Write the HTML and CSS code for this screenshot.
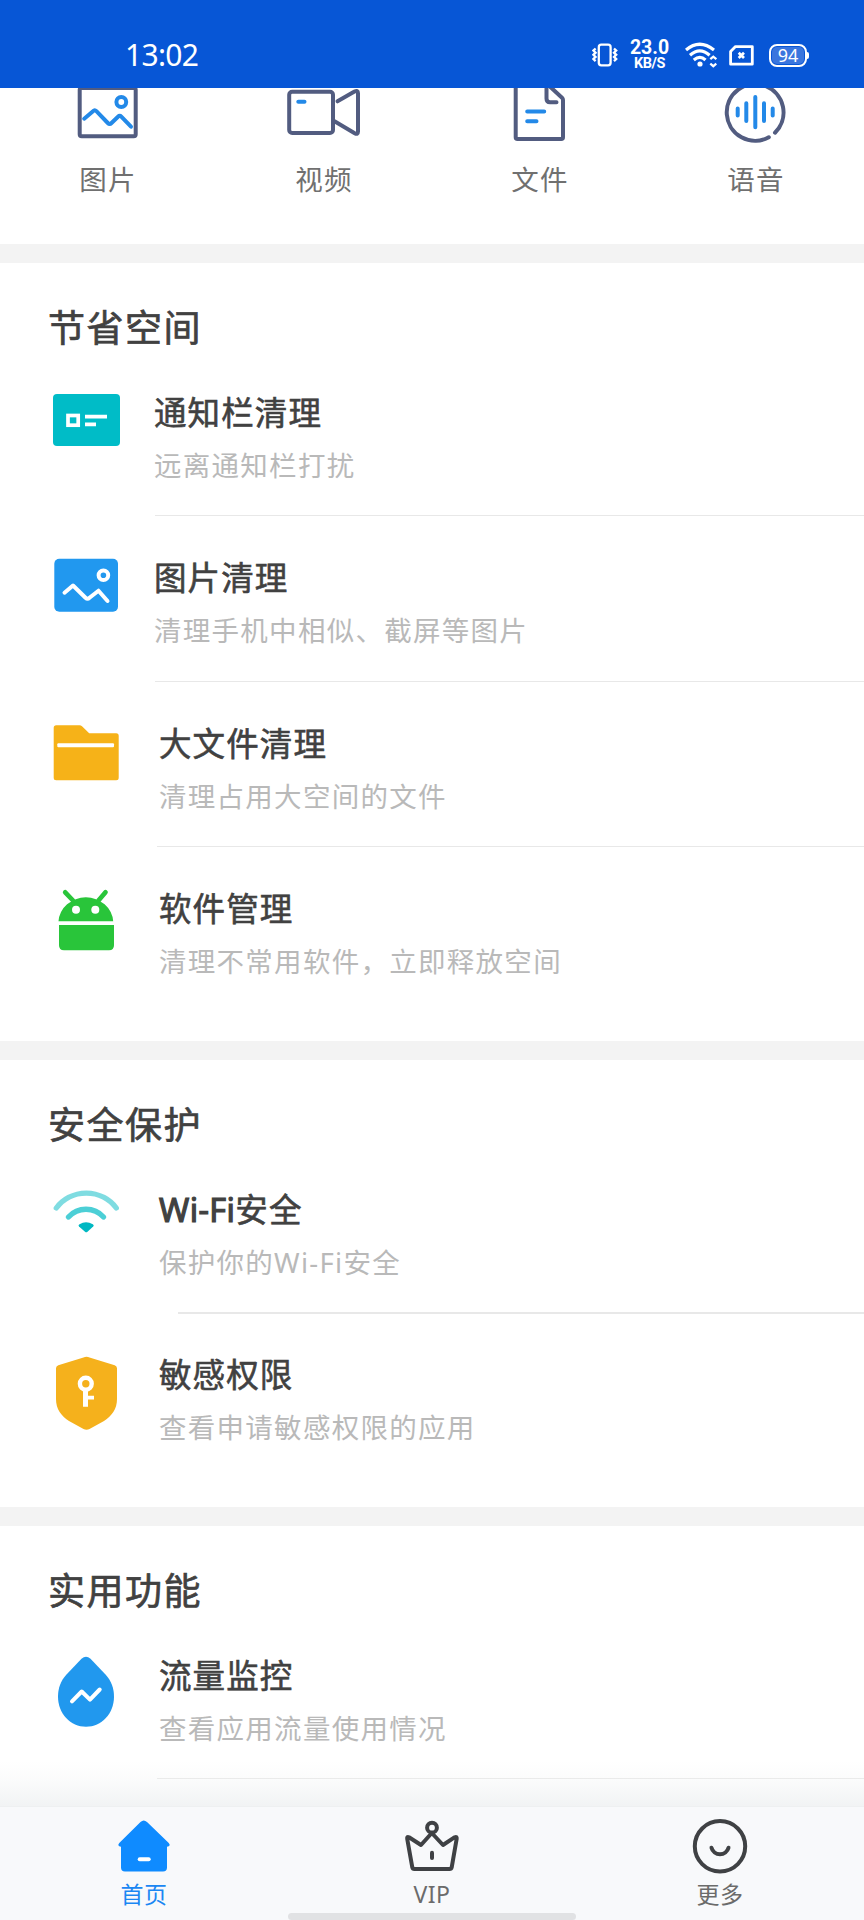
FILE: index.html
```html
<!DOCTYPE html>
<html lang="zh-CN">
<head>
<meta charset="utf-8">
<title>手机清理</title>
<link rel="stylesheet" href="styles.css">
</head>
<body>
<div class="phone">
  <header class="status">
    <span class="clock">13:02</span>
    <div class="indicators">
      <svg class="vibrate" width="26" height="24" viewBox="0 0 26 24" fill="none" stroke="#fff" stroke-width="2.300">
        <rect x="6.800" y="1.700" width="11.800" height="20.600" rx="2.500"/>
        <path d="M3.600 5.500 1.400 7.600 3.600 9.700 1.400 11.800 3.600 13.900 1.400 16 3.600 18.100M22 5.500 24.200 7.600 22 9.700 24.200 11.800 22 13.900 24.200 16 22 18.100"/>
      </svg>
      <div class="speed"><span class="speed-value">23.0</span><span class="speed-unit">KB/S</span></div>
      <svg class="signal" width="32" height="26" viewBox="0 0 32 26" fill="none" stroke="#fff" stroke-width="3.200">
        <path d="M1 8Q14.500-3.500 29 8M5 13.200Q14.800 4.500 24.600 13.200M8.800 18Q15 12.800 20.500 18"/>
        <circle cx="15" cy="22" r="2.600" fill="#fff" stroke="none"/>
        <path d="M25.300 17.200 28.300 14.600 31.300 17.200M25.300 21.600 28.300 24.200 31.300 21.600" stroke-width="2.200"/>
      </svg>
      <svg class="sim" width="25" height="21" viewBox="0 0 25 21" fill="none" stroke="#fff" stroke-width="2.800">
        <path d="M6.500 1.600H23.300V19.200H1.600V6.500Z" stroke-linejoin="round"/>
        <path d="M9.700 7.700 15 13M15 7.700 9.700 13" stroke-width="2.700"/>
      </svg>
      <div class="battery"><span class="battery-level">94</span></div>
    </div>
  </header>

  <main class="content">
    <nav class="files">
      <a class="file">
        <svg width="216" height="60" viewBox="0 0 216 60" class="line-icon">
          <rect x="79.700" y="0" width="56" height="48.200" rx="2"/>
          <g class="accent"><circle cx="121.300" cy="14" r="4.900"/>
          <path d="M84.200 30.700 93 23.200Q94.700 21.500 96.400 23.200L107.800 35Q109.700 36.900 111.500 35L118 28.700Q119.700 27 121.300 28.700L131 38.700"/></g>
        </svg>
        <span class="file-name">图片</span>
      </a>
      <a class="file">
        <svg width="216" height="60" viewBox="0 0 216 60" class="line-icon">
          <rect x="73.200" y="3.700" width="43.800" height="41.200" rx="3"/>
          <path d="M121.500 13.300 138.500 3.500Q142 1.800 142 5.200V43.500Q142 47 138.700 45.200L118.500 33.300"/>
          <path class="accent" d="M82.300 13.700H88.500"/>
        </svg>
        <span class="file-name">视频</span>
      </a>
      <a class="file">
        <svg width="216" height="60" viewBox="0 0 216 60" class="line-icon">
          <path d="M83.700-6V49.200Q83.700 51 85.500 51H129.200Q131 51 131 49.200V12Q131 10.700 130 9.700L113-6"/>
          <path d="M114.500-4V10.500Q114.500 14.300 118 14.300H124.500"/>
          <path class="accent" d="M95.200 23.400H112.200M95.200 33.200H104.500"/>
        </svg>
        <span class="file-name">文件</span>
      </a>
      <a class="file">
        <svg width="216" height="60" viewBox="0 0 216 60" class="line-icon">
          <path d="M120.800 49.300A28.400 28.400 0 1 1 127 44.700"/>
          <path class="accent" d="M89.700 20.600V27.400M98.300 15.300V33M107.300 9V39.200M116 15.300V33M124.700 20.600V27.400"/>
        </svg>
        <span class="file-name">语音</span>
      </a>
    </nav>

    <section class="group">
      <h2 class="group-title">节省空间</h2>
      <div class="row row-near">
        <svg class="row-icon" viewBox="0 0 80 84">
          <rect x="7" y="8" width="67" height="52" rx="4" fill="#00bcc7"/>
          <rect x="22" y="29.500" width="10.200" height="9.700" fill="none" stroke="#fff" stroke-width="3.700"/>
          <path d="M39 28.700H61V32.600H39ZM39 36.400H50V40.200H39Z" fill="#fff"/>
        </svg>
        <div class="row-text"><h3 class="row-title">通知栏清理</h3><p class="row-note">远离通知栏打扰</p></div>
      </div>
      <div class="row row-near">
        <svg class="row-icon" viewBox="0 0 80 84">
          <rect x="8.300" y="7.700" width="63.700" height="53" rx="5" fill="#2198ef"/>
          <g class="stroke-white"><circle cx="57.400" cy="24.300" r="4.800"/>
          <path d="M18.500 41.700 27 34.500 39.500 46.800Q41.500 48.700 43.500 46.800L52.500 39.700 61.500 50"/></g>
        </svg>
        <div class="row-text"><h3 class="row-title">图片清理</h3><p class="row-note">清理手机中相似、截屏等图片</p></div>
      </div>
      <div class="row">
        <svg class="row-icon" viewBox="0 0 80 84">
          <path d="M10.200 8.300H33.500Q35 8.300 36 9.300L43.200 16.200H70.200Q72.700 16.200 72.700 18.700V60.800Q72.700 63.300 70.200 63.300H10.200Q7.700 63.300 7.700 60.800V10.800Q7.700 8.300 10.200 8.300Z" fill="#f6b218"/>
          <rect x="11.300" y="26.300" width="56.700" height="4" rx="1" fill="#fff"/>
        </svg>
        <div class="row-text"><h3 class="row-title">大文件清理</h3><p class="row-note">清理占用大空间的文件</p></div>
      </div>
      <div class="row row-last">
        <svg class="row-icon" viewBox="0 0 80 84">
          <path d="M12.500 39.300A27.400 25.500 0 0 1 67.200 39.300ZM13 43H68V63.300Q68 68.300 63 68.300H18Q13 68.300 13 63.300Z" fill="#29c53a"/>
          <path d="M19.200 10.300 27 18.500M59.500 10.300 52.500 18.500" stroke="#29c53a" stroke-width="4.700" stroke-linecap="round"/>
          <circle cx="30" cy="27.700" r="4" fill="#fff"/><circle cx="49.300" cy="27.700" r="4" fill="#fff"/>
        </svg>
        <div class="row-text"><h3 class="row-title">软件管理</h3><p class="row-note">清理不常用软件，立即释放空间</p></div>
      </div>
    </section>

    <section class="group">
      <h2 class="group-title">安全保护</h2>
      <div class="row row-inset">
        <svg class="row-icon" viewBox="0 0 80 84">
          <g fill="none" stroke="#00bac4" stroke-linecap="round" stroke-width="5.300">
            <path d="M10.300 25A37.600 37.600 0 0 1 70.300 25" opacity=".5"/>
            <path d="M22.500 34A23.600 23.600 0 0 1 57.500 34" opacity=".7"/>
          </g>
          <path d="M33.500 41.200Q40 37.400 46.800 41.200 48.500 42.300 47.200 43.500L41.500 48.700Q40.200 49.700 39 48.700L33 43.500Q31.700 42.300 33.500 41.200Z" fill="#00b8c2"/>
        </svg>
        <div class="row-text"><h3 class="row-title"><span class="latin">Wi-Fi</span>安全</h3><p class="row-note">保护你的Wi-Fi安全</p></div>
      </div>
      <div class="row row-last">
        <svg class="row-icon" viewBox="0 0 80 84">
          <path d="M37.500 9.500Q40.500 8.200 43.500 9.500L68.700 17.200Q71 18 71 20.300V51C71 61 66 67.500 58 73L43.500 81Q40.500 82.600 37.500 81L23 73C15 67.500 10 61 10 51V20.300Q10 18 12.300 17.200Z" fill="#f5b11c"/>
          <circle cx="39.800" cy="35.700" r="5.900" fill="none" stroke="#fff" stroke-width="4.400"/>
          <path d="M37 42H42V47.700H48V51.400H42V58.700H37Z" fill="#fff"/>
        </svg>
        <div class="row-text"><h3 class="row-title">敏感权限</h3><p class="row-note">查看申请敏感权限的应用</p></div>
      </div>
    </section>

    <section class="group">
      <h2 class="group-title">实用功能</h2>
      <div class="row">
        <svg class="row-icon" viewBox="0 0 80 84">
          <path d="M35.500 9.700Q40 6 44.500 9.700L59.500 25.500C65.500 32 68 39.500 68 47.700 68 64.500 55.500 77.700 40 77.700S12 64.500 12 47.700C12 39.500 14.500 32 20.500 25.500Z" fill="#2198ee"/>
          <path class="stroke-white" d="M26 52.300 35.700 42.500 44 50.700 53.700 40.500"/>
        </svg>
        <div class="row-text"><h3 class="row-title">流量监控</h3><p class="row-note">查看应用流量使用情况</p></div>
      </div>
    </section>
    <div class="fade"></div>
  </main>

  <nav class="tabs">
    <a class="tab tab-active">
      <svg width="60" height="58" viewBox="0 0 60 58">
        <path d="M26.500 5Q29.700 1.800 33 5L54.500 25.800Q57.500 29 53 29.800V50.500Q53 54.500 49 54.500H11Q7 54.500 7 50.500V29.800Q2.500 29 5.500 25.800Z" fill="#0f8bff"/>
        <path d="M25.700 42.300H34.700" stroke="#fff" stroke-width="4" stroke-linecap="round"/>
      </svg>
      <span class="tab-name">首页</span>
    </a>
    <a class="tab">
      <svg width="60" height="58" viewBox="0 0 60 58" class="tab-line">
        <circle cx="30" cy="10.700" r="4.900"/>
        <path d="M29.800 16 19 28 7 20.200Q4.800 19.200 5.200 21.700L10.300 50.300Q10.700 52 12.300 52H47.500Q49.300 52 49.700 50.300L54.700 21.700Q55 19.200 52.800 20.200L41 28Z"/>
        <path d="M30 35.700V41"/>
      </svg>
      <span class="tab-name">VIP</span>
    </a>
    <a class="tab">
      <svg width="60" height="58" viewBox="0 0 60 58" class="tab-line">
        <circle cx="30" cy="29.300" r="25.200"/>
        <path d="M21.500 30.800A8.800 8.800 0 0 0 38.500 30.800"/>
      </svg>
      <span class="tab-name">更多</span>
    </a>
    <div class="home-bar"></div>
  </nav>
</div>
</body>
</html>
```

FILE: styles.css
```css
* { box-sizing: border-box; }

body {
  margin: 0;
  background: #fff;
  font-family: "Noto Sans", "Noto Sans CJK SC", sans-serif;
}

h2, h3, p { margin: 0; font-weight: 400; }

.phone {
  display: flex;
  flex-direction: column;
  width: 864px;
  height: 1920px;
  overflow: hidden;
}

/* Status bar */
.status {
  display: flex;
  flex: none;
  justify-content: space-between;
  height: 88px;
  padding: 22px 53px 0 125px;
  background: #0756d6;
  color: #fff;
}

.clock {
  height: 66px;
  font-size: 30px;
  line-height: 65px;
  letter-spacing: -.7px;
}

.indicators {
  display: flex;
  align-items: center;
  height: 66px;
}

.vibrate { margin-right: 12px; }

.speed {
  display: flex;
  flex-direction: column;
  align-items: center;
  width: 39px;
  margin: 0 16px 0 0;
  font-family: Roboto, sans-serif;
  font-weight: 700;
}

.speed-value { font-size: 19.500px; line-height: 17px; }
.speed-unit { font-size: 14.500px; line-height: 15px; letter-spacing: -.5px; }

.signal { margin-right: 12px; }
.sim { margin-right: 15px; }

.battery {
  position: relative;
  width: 38px;
  height: 23px;
  padding: 1px;
  border: 2px solid #fff;
  border-radius: 8px;
  margin-right: 4px;
}

.battery::after {
  content: "";
  position: absolute;
  top: 6px;
  right: -4px;
  width: 2px;
  height: 7px;
  border-radius: 0 2px 2px 0;
  background: #fff;
}

.battery-level {
  display: block;
  height: 17px;
  border-radius: 5px;
  background: #3a76de;
  font-size: 18px;
  line-height: 17px;
  text-align: center;
}

/* Scrolling content */
.content {
  position: relative;
  flex: 1;
  min-height: 0;
  overflow: hidden;
}

.files {
  display: grid;
  grid-template-columns: repeat(4, 1fr);
  height: 156px;
}

.file { display: flex; flex-direction: column; }

.line-icon {
  display: block;
  fill: none;
  stroke: #525c80;
  stroke-width: 4;
  stroke-linecap: round;
  stroke-linejoin: round;
}

.accent { stroke: #2389e8; }

.file-name {
  padding-top: 12px;
  color: #707070;
  font-size: 27.500px;
  line-height: 40px;
  letter-spacing: 1.200px;
  text-align: center;
}

.group {
  border-top: 19px solid #f3f3f3;
}

.group-title {
  height: 88px;
  padding: 42px 0 0 48px;
  color: #414141;
  font-size: 37px;
  line-height: 46px;
  letter-spacing: 1.500px;
  -webkit-text-stroke: .7px #414141;
}

.row {
  display: flex;
  position: relative;
  height: 165.300px;
  padding: 35px 0 0 46px;
}

.row::after {
  content: "";
  position: absolute;
  left: 157px;
  right: 0;
  bottom: 0;
  height: 1px;
  background: #e8e8e8;
}

.row-icon {
  flex: none;
  width: 80px;
  height: 84px;
}

.row-text { padding: 5px 0 0 33px; }
.row-near .row-text { padding-left: 28px; }
.row-near::after { left: 155px; }
.row-inset::after { left: 178px; bottom: -1px; height: 2px; background: #e8e8e8; }
.row-last { height: 193.800px; }
.row-last::after { display: none; }

.row-title {
  color: #414141;
  font-size: 32.500px;
  line-height: 44px;
  letter-spacing: 1.100px;
  -webkit-text-stroke: .6px #414141;
}

.latin {
  letter-spacing: .4px;
  -webkit-text-stroke-width: 1.200px;
}

.row-note {
  padding-top: 13px;
  color: #b9b9b9;
  font-size: 27.500px;
  line-height: 36px;
  letter-spacing: 1.280px;
}

.stroke-white {
  fill: none;
  stroke: #fff;
  stroke-width: 4;
  stroke-linecap: round;
  stroke-linejoin: round;
}

.fade {
  position: absolute;
  left: 0;
  right: 0;
  bottom: 0;
  height: 46px;
  border-bottom: 1px solid #eef0f1;
  background: linear-gradient(rgba(240, 242, 243, 0), rgba(240, 242, 243, .25) 40%, rgba(240, 242, 243, .9));
}

/* Bottom tabs */
.tabs {
  display: grid;
  position: relative;
  flex: none;
  grid-template-columns: repeat(3, 1fr);
  height: 113px;
  background: #f8f9fb;
}

.tab {
  display: flex;
  flex-direction: column;
  align-items: center;
  padding-top: 10px;
  color: #6b6b6b;
}

.tab-line {
  fill: none;
  stroke: #3f4144;
  stroke-width: 4;
  stroke-linecap: round;
  stroke-linejoin: round;
}

.tab-name {
  padding-top: 3px;
  font-size: 23px;
  line-height: 32px;
  letter-spacing: .5px;
}

.tab-active { color: #1b87f3; }

.home-bar {
  position: absolute;
  bottom: 0;
  left: 288px;
  width: 288px;
  height: 7px;
  border-radius: 4px;
  background: #e1e2e4;
}
```
